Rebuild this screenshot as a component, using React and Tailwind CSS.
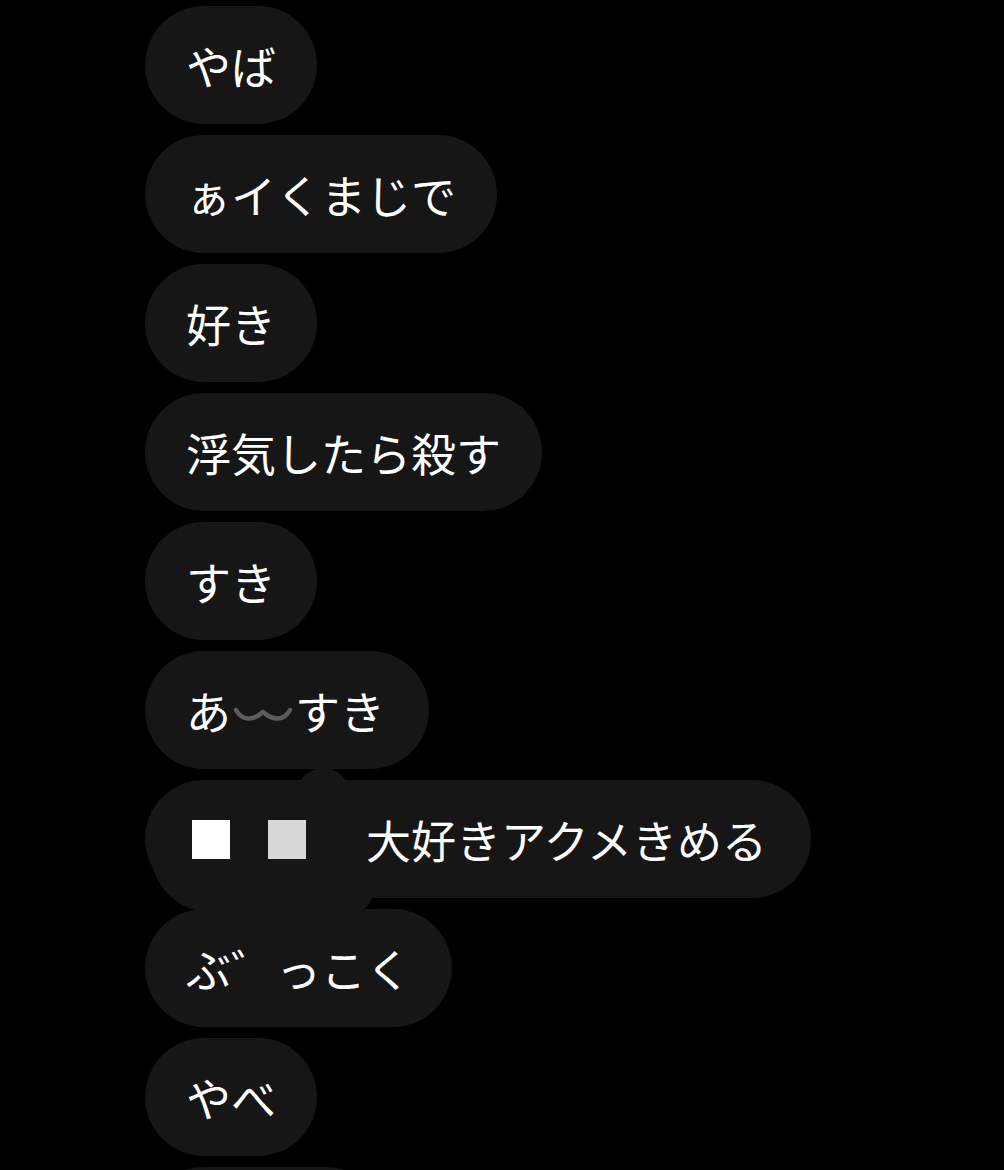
import React from "react";

const font = { fontFamily: '"Noto Sans CJK JP", "Noto Sans", sans-serif' };

function Bubble({ children, className = "" }) {
  return (
    <div
      className={`h-[118px] shrink-0 rounded-full bg-[#161616] px-[41px] flex items-center text-[45px] leading-none text-white whitespace-nowrap ${className}`}
    >
      {children}
    </div>
  );
}

function Wave() {
  return (
    <svg width="64" height="20" viewBox="0 0 64 20">
      <path
        d="M5 6 C11 17, 22 17, 32 8 C42 17, 53 17, 59 6"
        fill="none"
        stroke="#5c5c5c"
        strokeWidth="4.5"
        strokeLinecap="round"
        strokeLinejoin="round"
      />
    </svg>
  );
}

export default function App() {
  return (
    <div
      className="w-[1004px] h-[1170px] bg-black overflow-hidden pl-[145px] pt-[6px] flex flex-col items-start gap-[11px]"
      style={font}
    >
      <Bubble>やば</Bubble>
      <Bubble>ぁイくまじで</Bubble>
      <Bubble>好き</Bubble>
      <Bubble>浮気したら殺す</Bubble>
      <Bubble>すき</Bubble>
      <Bubble className="pr-[44px]">
        <span>あ</span>
        <span className="mt-[8px] flex items-center">
          <Wave />
        </span>
        <span>すき</span>
      </Bubble>
      <div className="relative shrink-0">
        <div className="absolute left-[151px] top-[-12px] w-[54px] h-[40px] rounded-t-full bg-[#161616]" />
        <div className="absolute left-[6px] top-[30px] w-[222px] h-[102px] rounded-bl-[60px] rounded-br-[20px] bg-[#161616]" />
        <div className="relative h-[118px] w-[666px] rounded-full bg-[#161616] pl-[47px] flex items-center text-[45px] leading-none text-white whitespace-nowrap">
          <span className="w-[38px] h-[39px] bg-white" />
          <span className="ml-[38px] w-[38px] h-[39px] bg-[#d8d8d8]" />
          <span className="ml-[60px]">大好きアクメきめる</span>
        </div>
      </div>
      <Bubble>ぶ゛っこく</Bubble>
      <Bubble>やべ</Bubble>
      <div className="h-[118px] w-[240px] shrink-0 rounded-full bg-[#161616]" />
    </div>
  );
}
